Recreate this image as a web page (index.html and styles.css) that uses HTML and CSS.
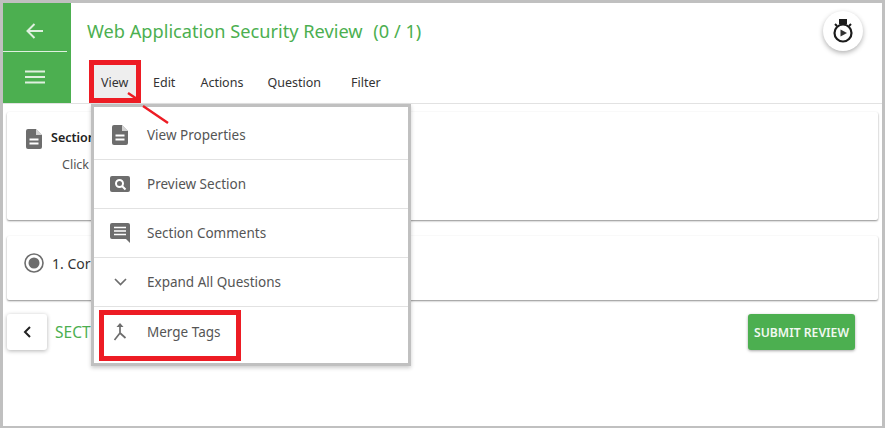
FILE: index.html
```html
<!DOCTYPE html>
<html lang="en">

<head>
    <meta charset="UTF-8">
    <title>Web Application Security Review</title>
    <link rel="stylesheet" href="styles.css">
</head>

<body>
    <div class="frame">
        <header class="top-bar">
            <div class="side-block">
                <div class="side-btn side-back">
                    <svg width="20" height="18" viewBox="0 0 20 18"><path d="M18 9H2.500M9.500 2L2.500 9l7 7" fill="none" stroke="#dff0df" stroke-width="2"/></svg>
                </div>
                <div class="side-btn">
                    <svg width="20" height="14" viewBox="0 0 20 14"><path d="M0 1.500h20M0 7h20M0 12.500h20" stroke="#dff0df" stroke-width="1.800"/></svg>
                </div>
            </div>
            <div class="title-area">
                <h1 class="review-title">Web Application Security Review <span class="review-count">(0 / 1)</span></h1>
                <nav class="tabs">
                    <span class="tab tab-active">View</span>
                    <span class="tab">Edit</span>
                    <span class="tab">Actions</span>
                    <span class="tab tab-question">Question</span>
                    <span class="tab tab-filter">Filter</span>
                </nav>
            </div>
            <div class="timer-btn">
                <svg width="20" height="24" viewBox="0 0 20 24">
                    <rect x="6" y="0" width="8" height="5" fill="#1b1b1b"/>
                    <path d="M2 5l2 2M18 5l-2 2" stroke="#1b1b1b" stroke-width="2"/>
                    <circle cx="10" cy="14" r="8.500" fill="none" stroke="#1b1b1b" stroke-width="2.200"/>
                    <path d="M7.500 10.500l6.500 3.500-6.500 3.500z" fill="#333"/>
                </svg>
            </div>
        </header>

        <main class="content">
            <section class="card card-section">
                <svg class="doc-icon" width="16" height="20" viewBox="0 0 16 20"><path d="M2 0h8l6 6v12a2 2 0 0 1-2 2H2a2 2 0 0 1-2-2V2a2 2 0 0 1 2-2z" fill="#6d6d6d"/><path d="M10 0v6h6z" fill="#fff" opacity=".7"/><path d="M3.500 10.500h9M3.500 14.500h9" stroke="#fff" stroke-width="2"/></svg>
                <div>
                    <div class="section-name">Section</div>
                    <div class="section-hint">Click</div>
                </div>
            </section>

            <section class="card card-question">
                <svg width="20" height="20" viewBox="0 0 20 20"><circle cx="10" cy="10" r="9" fill="none" stroke="#6d6d6d" stroke-width="1.600"/><circle cx="10" cy="10" r="5.500" fill="#6d6d6d"/></svg>
                <span class="question-text">1. Cor</span>
            </section>

            <div class="footer-row">
                <div class="prev-btn">
                    <svg width="8" height="12" viewBox="0 0 8 12"><path d="M7 1L2 6l5 5" fill="none" stroke="#222" stroke-width="2"/></svg>
                </div>
                <span class="section-link">SECT</span>
                <button type="button" class="submit-btn">SUBMIT REVIEW</button>
            </div>
        </main>

        <ul class="menu">
            <li class="menu-item">
                <span class="menu-icon"><svg width="16" height="20" viewBox="0 0 16 20"><path d="M2 0h8l6 6v12a2 2 0 0 1-2 2H2a2 2 0 0 1-2-2V2a2 2 0 0 1 2-2z" fill="#6d6d6d"/><path d="M10 0v6h6z" fill="#fff" opacity=".7"/><path d="M3.500 10.500h9M3.500 14.500h9" stroke="#fff" stroke-width="2"/></svg></span>
                View Properties
            </li>
            <li class="menu-item">
                <span class="menu-icon"><svg width="20" height="16" viewBox="0 0 20 16"><rect width="20" height="16" rx="2" fill="#6d6d6d"/><circle cx="9.500" cy="7.500" r="3.500" fill="none" stroke="#fff" stroke-width="2"/><path d="M12 10l3.500 3.500" stroke="#fff" stroke-width="2"/></svg></span>
                Preview Section
            </li>
            <li class="menu-item">
                <span class="menu-icon"><svg width="20" height="20" viewBox="0 0 20 20"><path d="M2 0h16a2 2 0 0 1 2 2v18l-4-4H2a2 2 0 0 1-2-2V2a2 2 0 0 1 2-2z" fill="#6d6d6d"/><path d="M4 4.500h12M4 8h12M4 11.500h12" stroke="#fff" stroke-width="1.500"/></svg></span>
                Section Comments
            </li>
            <li class="menu-item">
                <span class="menu-icon"><svg width="13" height="8" viewBox="0 0 13 8"><path d="M1 1l5.500 5.500L12 1" fill="none" stroke="#6d6d6d" stroke-width="1.700"/></svg></span>
                Expand All Questions
            </li>
            <li class="menu-item">
                <span class="menu-icon"><svg width="14" height="20" viewBox="0 0 14 20"><path d="M7 2v9L1.500 18M7 11l5.500 5" fill="none" stroke="#6d6d6d" stroke-width="1.700"/><path d="M3.500 5L7 1l3.500 4z" fill="#6d6d6d"/></svg></span>
                Merge Tags
            </li>
        </ul>

        <!-- red annotations drawn on top of the screenshot -->
        <div class="mark mark-view"></div>
        <div class="mark mark-merge"></div>
        <svg class="mark-line" width="50" height="40" viewBox="0 0 50 40"><path d="M3 3l9 6M18 16l25 17" stroke="#ed1c24" stroke-width="2.500"/></svg>
    </div>
</body>

</html>
```

FILE: styles.css
```css
* {
    box-sizing: border-box;
}

html, body {
    margin: 0;
    height: 100%;
}

body {
    font-family: 'Noto Sans', sans-serif;
    background-color: #fff;
    color: #333;
}

.frame {
    position: relative;
    height: 428px;
    border: 3px solid #c0c0c0;
    border-bottom-width: 2px;
    overflow: hidden;
}

.top-bar {
    display: flex;
    height: 101px;
    border-bottom: 1px solid #e2e2e2;
}

.side-block {
    width: 68px;
    background-color: #4caf50;
    display: flex;
    flex-direction: column;
    flex-shrink: 0;
}

.side-btn {
    height: 49px;
    display: flex;
    align-items: center;
    justify-content: center;
    padding-right: 4px;
}

.side-back {
    height: 49px;
    margin-right: 4px;
    padding-right: 0;
    padding-top: 7px;
    border-bottom: 1px solid #dff0df;
}

.title-area {
    flex: 1;
    padding: 15px 0 0 16px;
}

.review-title {
    margin: 0;
    font-size: 18.200px;
    line-height: 26px;
    font-weight: 400;
    color: #4caf50;
}

.review-count {
    margin-left: 6px;
}

.tabs {
    display: flex;
    margin-top: 21px;
    font-size: 12.500px;
    color: #333;
}

.tab {
    height: 35px;
    line-height: 36px;
    padding: 0 10px 0 12px;
    margin-right: 3px;
}

.tab-active {
    background-color: #eee;
    margin-left: 6px;
    width: 44px;
    margin-right: 4px;
    padding: 0 0 0 8px;
}

.tab-question {
    margin-left: -1px;
}

.tab-filter {
    margin-left: 5px;
}

.timer-btn {
    width: 40px;
    height: 40px;
    border-radius: 50%;
    background-color: #fff;
    margin: 8px 19px 0 0;
    box-shadow: 0 2px 5px rgba(0, 0, 0, 0.3);
    display: flex;
    align-items: center;
    justify-content: center;
}

.content {
    padding: 8px 4px 0;
}

.card {
    background-color: #fff;
    border-radius: 2px;
    box-shadow: 0 1px 2px rgba(0, 0, 0, 0.45);
}

.card-section {
    height: 108px;
    display: flex;
    padding: 17px 0 0 19px;
    gap: 9px;
}

.section-name {
    font-size: 12.500px;
    font-weight: 600;
    line-height: 17px;
    color: #222;
}

.section-hint {
    font-size: 12.500px;
    line-height: 17px;
    margin: 10px 0 0 11px;
    color: #555;
}

.card-question {
    height: 64px;
    margin-top: 16px;
    display: flex;
    align-items: center;
    gap: 8px;
    padding: 0 0 10px 17px;
    font-size: 14px;
}

.footer-row {
    display: flex;
    align-items: center;
    margin-top: 14px;
    padding-right: 23px;
}

.prev-btn {
    width: 40px;
    height: 36px;
    border-radius: 3px;
    box-shadow: 0 1px 4px rgba(0, 0, 0, 0.3);
    display: flex;
    align-items: center;
    justify-content: center;
}

.section-link {
    margin-left: 8px;
    font-size: 15.500px;
    color: #4caf50;
}

.submit-btn {
    margin-left: auto;
    width: 107px;
    height: 36px;
    padding: 0;
    border: none;
    border-radius: 3px;
    background-color: #4caf50;
    color: #f0f8f0;
    font-family: inherit;
    font-size: 12.200px;
    font-weight: 600;
    box-shadow: 0 1px 3px rgba(0, 0, 0, 0.35);
}

.menu {
    position: absolute;
    left: 88px;
    top: 101px;
    width: 320px;
    height: 262px;
    margin: 0;
    padding: 4px 0 0;
    list-style: none;
    background-color: #fff;
    border: 3px solid #c0c0c0;
    box-shadow: 0 2px 4px rgba(0, 0, 0, 0.2);
}

.menu-item {
    height: 49px;
    display: flex;
    align-items: center;
    font-size: 13.500px;
    color: #555;
    border-bottom: 1px solid #e2e2e2;
}

.menu-item:last-child {
    border-bottom: none;
}

.menu-icon {
    width: 53px;
    padding-right: 1px;
    display: flex;
    justify-content: center;
    flex-shrink: 0;
}

.mark {
    position: absolute;
    border: 5px solid #ed1c24;
}

.mark-view {
    left: 86px;
    top: 57px;
    width: 52px;
    height: 43px;
}

.mark-merge {
    left: 96px;
    top: 307px;
    width: 142px;
    height: 51px;
}

.mark-line {
    position: absolute;
    left: 122px;
    top: 87px;
}
```
